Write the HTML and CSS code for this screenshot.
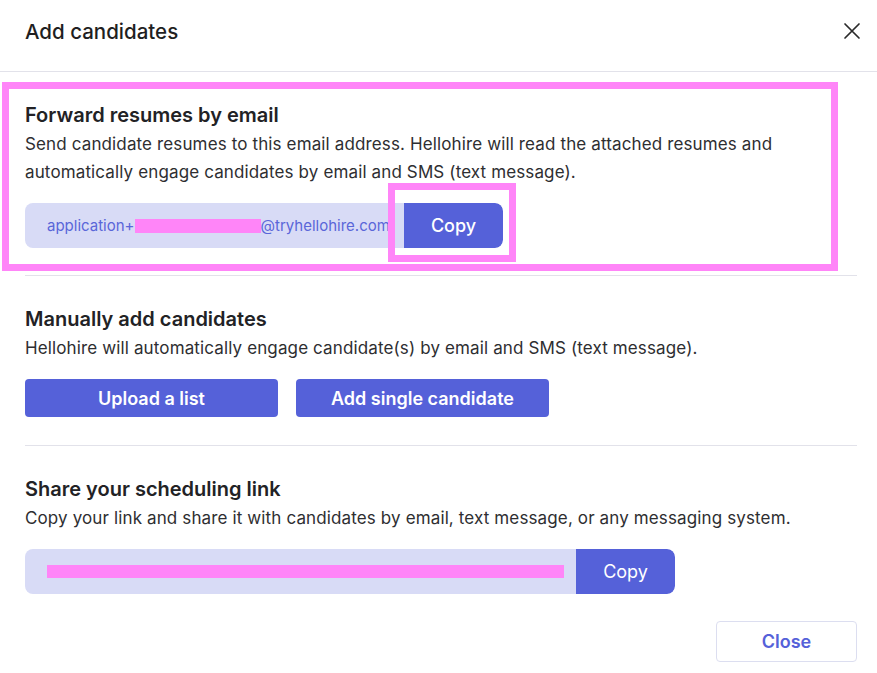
FILE: index.html
```html
<!DOCTYPE html>
<html lang="en">
<head>
<meta charset="utf-8">
<title>Add candidates</title>
<link rel="stylesheet" href="styles.css">
</head>
<body>
<div class="dialog">
  <header class="dialog-header">
    <h1 class="dialog-title">Add candidates</h1>
    <button class="close-x" aria-label="Close">
      <svg width="18" height="18" viewBox="0 0 18 18"><path d="M2 2L16 16M16 2L2 16" stroke="#2a2a2a" stroke-width="1.7" stroke-linecap="round" fill="none"/></svg>
    </button>
  </header>
  <div class="dialog-body">
    <section class="section">
      <h2 class="section-title">Forward resumes by email</h2>
      <p class="section-text">Send candidate resumes to this email address. Hellohire will read the attached resumes and automatically engage candidates by email and SMS (text message).</p>
      <div class="copy-field email-field">
        <div class="copy-value">application+<span class="redact redact-email"></span>@tryhellohire.com</div>
        <button class="copy-btn">Copy</button>
      </div>
    </section>
    <section class="section middle">
      <h2 class="section-title">Manually add candidates</h2>
      <p class="section-text">Hellohire will automatically engage candidate(s) by email and SMS (text message).</p>
      <div class="btn-row">
        <button class="primary-btn">Upload a list</button>
        <button class="primary-btn">Add single candidate</button>
      </div>
    </section>
    <section class="section last">
      <h2 class="section-title">Share your scheduling link</h2>
      <p class="section-text">Copy your link and share it with candidates by email, text message, or any messaging system.</p>
      <div class="copy-field link-field">
        <div class="copy-value link-value"><span class="redact redact-link"></span></div>
        <button class="copy-btn light">Copy</button>
      </div>
    </section>
  </div>
  <footer class="dialog-footer">
    <button class="secondary-btn">Close</button>
  </footer>
  <div class="highlight highlight-section"></div>
  <div class="highlight highlight-copy"></div>
</div>
</body>
</html>
```

FILE: styles.css
```css
* { box-sizing: border-box; }

html, body {
  margin: 0;
  padding: 0;
  background: #ffffff;
}

body {
  font-family: Inter, "Noto Sans", "Liberation Sans", sans-serif;
  color: #2b2b2e;
}

.dialog {
  position: relative;
  width: 877px;
  min-height: 673px;
}

.dialog-header {
  display: flex;
  justify-content: space-between;
  align-items: flex-start;
  height: 72px;
  padding: 19px 16px 0 25px;
  border-bottom: 1px solid #e2e2ea;
}

.dialog-title {
  margin: 0;
  font-size: 20.5px;
  line-height: 26px;
  font-weight: 500;
  color: #1f1f22;
}

.close-x {
  border: 0;
  background: none;
  padding: 0;
  margin-top: 3px;
  width: 18px;
  height: 18px;
  cursor: pointer;
}

.dialog-body {
  padding: 0 20px 0 25px;
}

.section {
  padding: 30px 0 27px;
  border-bottom: 1px solid #e2e2ea;
}

.section + .section {
  padding-top: 30px;
}

.section.middle {
  padding-bottom: 28px;
}

.section.last {
  border-bottom: 0;
  padding-top: 30px;
  padding-bottom: 0;
}

.section-title {
  margin: 0 0 2px;
  font-size: 20px;
  line-height: 26px;
  font-weight: 600;
  color: #222225;
}

.section-text {
  margin: 0;
  font-size: 17px;
  letter-spacing: 0.13px;
  line-height: 28px;
  font-weight: 400;
  color: #2e2e31;
}

.copy-field {
  display: flex;
  height: 45px;
  margin-top: 17px;
  border-radius: 8px;
  overflow: hidden;
  background: #d8dbf6;
}

.email-field { width: 478px; }
.link-field { width: 650px; }

.copy-value {
  flex: 1;
  display: flex;
  align-items: center;
  padding: 0 12px 0 22px;
  font-size: 15px;
  color: #5a66d9;
  white-space: nowrap;
  overflow: hidden;
}

.redact {
  display: inline-block;
  background: #ff85f8;
}

.redact-email {
  width: 126px;
  height: 14px;
}

.link-value {
  align-items: flex-start;
  padding-top: 16px;
}

.redact-link {
  width: 518px;
  height: 13px;
}

.copy-btn {
  flex: 0 0 99px;
  border: 0;
  border-radius: 0 8px 8px 0;
  background: #5561d9;
  color: #ffffff;
  font-family: inherit;
  font-size: 18px;
  font-weight: 500;
  cursor: pointer;
}

.copy-btn.light {
  font-weight: 400;
}

.btn-row {
  display: flex;
  gap: 18px;
  margin-top: 17px;
}

.primary-btn {
  width: 253px;
  height: 38px;
  border: 0;
  border-radius: 4px;
  background: #5561d9;
  color: #ffffff;
  font-family: inherit;
  font-size: 18px;
  font-weight: 600;
  cursor: pointer;
}

.dialog-footer {
  display: flex;
  justify-content: flex-end;
  padding: 27px 20px 0;
}

.secondary-btn {
  width: 141px;
  height: 41px;
  border: 1px solid #dcdef0;
  border-radius: 4px;
  background: #ffffff;
  color: #5561d9;
  font-family: inherit;
  font-size: 18px;
  font-weight: 600;
  cursor: pointer;
}

.highlight {
  position: absolute;
  border: 7px solid #ff85f8;
  pointer-events: none;
}

.highlight-section {
  left: 2px;
  top: 82px;
  width: 836px;
  height: 189px;
}

.highlight-copy {
  left: 388px;
  top: 183px;
  width: 128px;
  height: 79px;
}
```
